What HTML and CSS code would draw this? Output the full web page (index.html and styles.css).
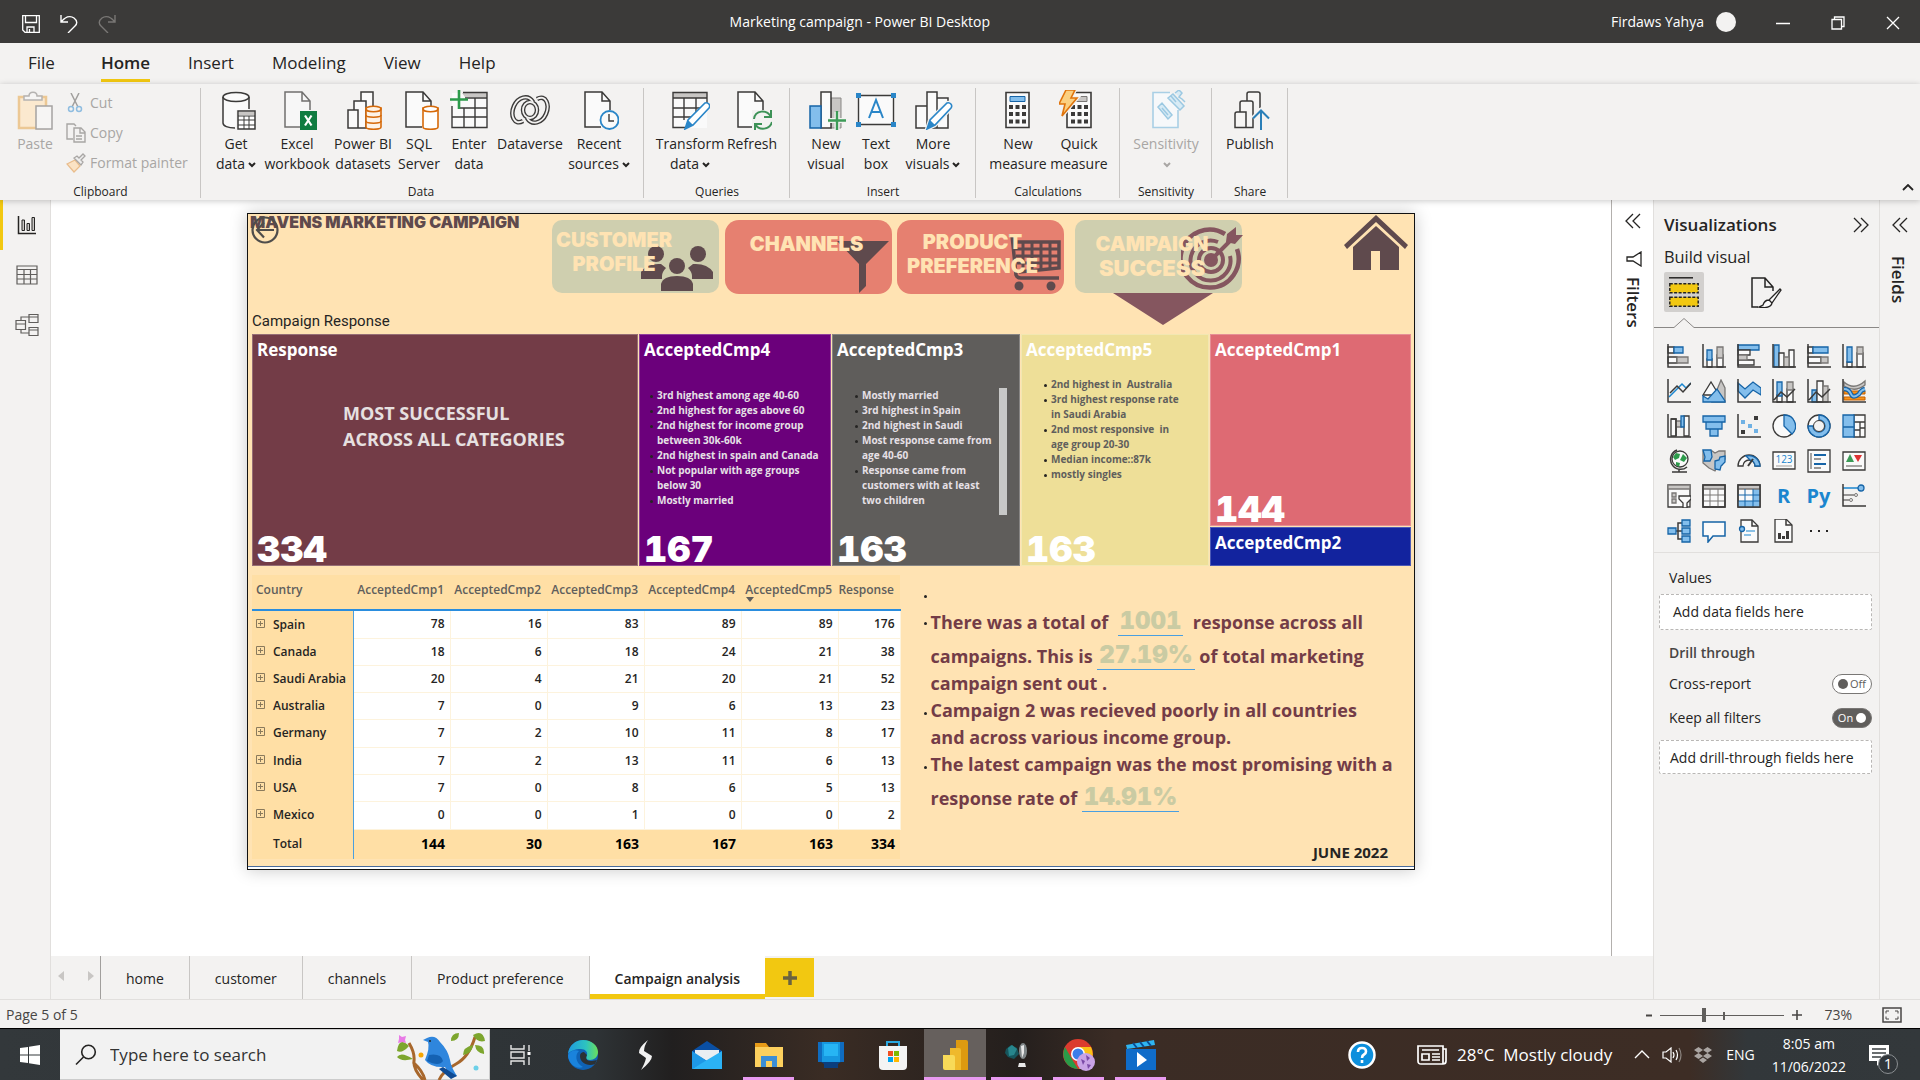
FILE: index.html
```html
<!DOCTYPE html>
<html lang="en">
<head>
<meta charset="utf-8">
<title>Marketing campaign - Power BI Desktop</title>
<link rel="stylesheet" href="styles.css">
</head>
<body>
<svg class="defs" aria-hidden="true">
  <symbol id="caret" viewBox="0 0 8 6"><path d="M1 1l3 3 3-3" fill="none" stroke="currentColor" stroke-width="2"/></symbol>
  <symbol id="dbl" viewBox="0 0 16 16"><path d="M8 1L1 8l7 7M15 1L8 8l7 7" fill="none" stroke="#252423" stroke-width="1.3"/></symbol>
  <symbol id="expand" viewBox="0 0 9 9"><path d="M.5.5h8v8h-8zM2 4.500h5M4.500 2v5" fill="none" stroke="#8a7a5c"/></symbol>
  <symbol id="page" viewBox="0 0 28 37"><path d="M1 1h17l8 9v26H1z" fill="#fafafa" stroke="none"/><path d="M26 19V10L18 1H1v35h16M18 1v9h8" fill="none" stroke="#3b3a39" stroke-width="1.5"/></symbol>
</svg>

<header class="titlebar">
  <div class="quick">
    <button aria-label="Save"><svg width="18" height="18" viewBox="0 0 18 18"><path d="M.7.7h16.600v16.600H3L.7 15zM3.500 1v6.500h11V1M5 17v-5h7v5M7.500 17v-3" fill="none" stroke="#fff" stroke-width="1.300"/></svg></button>
    <button aria-label="Undo"><svg width="18" height="18" viewBox="0 0 18 18"><path d="M1 0v7h7M1 7c4-5 9-7 13-4s3 6 1 8l-7 7" fill="none" stroke="#fff" stroke-width="1.400"/></svg></button>
    <button aria-label="Redo"><svg width="18" height="18" viewBox="0 0 18 18"><path d="M17 0v7h-7M17 7C13 2 8 0 4 3s-3 6-1 8l7 7" fill="none" stroke="#797775" stroke-width="1.400"/></svg></button>
  </div>
  <h1 class="wintitle">Marketing campaign - Power BI Desktop</h1>
  <div class="winright">
    <span>Firdaws Yahya</span><span class="avatar"></span>
    <button aria-label="Minimize"><svg width="14" height="14" viewBox="0 0 14 14"><path d="M0 7.500h14" stroke="#fff" stroke-width="1.500"/></svg></button>
    <button aria-label="Restore"><svg width="14" height="14" viewBox="0 0 14 14"><path d="M1 3.500h9.500V13H1zM3.500 3V1h9.500v9.500h-2" fill="none" stroke="#fff" stroke-width="1.300"/></svg></button>
    <button aria-label="Close"><svg width="14" height="14" viewBox="0 0 14 14"><path d="M1 1l12 12M13 1L1 13" stroke="#fff" stroke-width="1.300"/></svg></button>
  </div>
</header>

<nav class="menu">
  <a href="#">File</a><a href="#" class="on">Home</a><a href="#">Insert</a><a href="#">Modeling</a><a href="#">View</a><a href="#">Help</a>
</nav>

<section class="ribbon">
  <div class="group clip">
    <div class="tools">
      <button class="tool w48 off"><svg viewBox="0 0 40 40"><path d="M4 7h27v31H4z" fill="#fbe9cf" stroke="#ecc894" stroke-width="2.500"/><path d="M9 10V6h5c0-5 8-5 8 0h5v4z" fill="#f6f5f4" stroke="#b5b3b1" stroke-width="1.500"/><path d="M21 16h16v23H21z" fill="#f6f5f4" stroke="#a5a3a1" stroke-width="1.500"/></svg><span>Paste</span></button>
      <div class="small">
        <button><svg viewBox="0 0 20 20"><path d="M5 0l7 14M13 0L6 14" stroke="#a19f9d" stroke-width="1.500"/><circle cx="5" cy="16" r="2.500" fill="none" stroke="#8fbde0" stroke-width="1.500"/><circle cx="13" cy="16" r="2.500" fill="none" stroke="#8fbde0" stroke-width="1.500"/></svg>Cut</button>
        <button><svg viewBox="0 0 20 20"><path d="M7 16H1V1h7l2 2M8 5h7l4 4v10H8zM14 5v5h5M10 13h6M10 16h6" fill="none" stroke="#a8a6a4" stroke-width="1.400"/></svg>Copy</button>
        <button><svg viewBox="0 0 20 20"><path d="M1 11l8-4 5 6-6 6z" fill="#fbe3c4" stroke="#e9bd8c" stroke-width="1.300"/><path d="M8 5l7 7 2-3-2-2 4-4-2-2-4 4-2-2z" fill="#eee" stroke="#a8a6a4" stroke-width="1.300"/></svg>Format painter</button>
      </div>
    </div>
    <h2>Clipboard</h2>
  </div>
  <div class="group data">
    <div class="tools">
      <button class="tool w54"><svg viewBox="0 0 40 40"><path d="M7 7v26c0 3 6 5 13 5V20h13V7z" fill="#fafafa"/><ellipse cx="20" cy="7" rx="13" ry="4.500" fill="#fafafa" stroke="#3b3a39" stroke-width="1.500"/><path d="M7 7v26c0 3 5 5 12 5M33 7v12" fill="none" stroke="#3b3a39" stroke-width="1.500"/><path d="M22 21h17v18H22z" fill="#fff" stroke="#3b3a39" stroke-width="1.500"/><path d="M23 22h15v3H23z" fill="#c8c6c4"/><path d="M22 26h17M22 30h17M22 35h17M28 26v13M33 26v13" stroke="#3b3a39"/></svg><span>Get<br>data<svg class="car"><use href="#caret"/></svg></span></button>
      <button class="tool w68"><svg viewBox="0 0 40 40"><use href="#page" x="7" y="1" width="28" height="37" opacity=".7"/><path d="M23 21h17v19H23z" fill="#107c41"/><path d="M28 25.500l6.500 10M34.500 25.500l-6.500 10" stroke="#fff" stroke-width="2.200"/></svg><span>Excel<br>workbook</span></button>
      <button class="tool w64"><svg viewBox="0 0 40 40"><path d="M5 20h10v18H5zM11 11h12v27H15V20h-4zM18 2h12v36h-7V11h-5z" fill="#fafafa" stroke="#3b3a39" stroke-width="1.500"/><path d="M23 18v19c0 3 15 3 15 0V18z" fill="#fdf3e7" stroke="#d66a0a" stroke-width="1.600"/><ellipse cx="30.500" cy="19" rx="7.500" ry="2.800" fill="#fdf3e7" stroke="#d66a0a" stroke-width="1.600"/><path d="M23 25c0 3 15 3 15 0M23 31c0 3 15 3 15 0" fill="none" stroke="#d66a0a" stroke-width="1.600"/></svg><span>Power BI<br>datasets</span></button>
      <button class="tool w48"><svg viewBox="0 0 40 40"><use href="#page" x="6" y="1" width="28" height="37"/><path d="M24 18v19c0 3 15 3 15 0V18z" fill="#fff" stroke="#d66a0a" stroke-width="1.600"/><ellipse cx="31.500" cy="19" rx="7.500" ry="2.800" fill="#fff" stroke="#d66a0a" stroke-width="1.600"/></svg><span>SQL<br>Server</span></button>
      <button class="tool w52"><svg viewBox="0 0 40 40"><path d="M3 3h35v34H3z" fill="#fafafa"/><path d="M13 3h25v4H16z" fill="#c8c6c4"/><path d="M14 2.500h24v35H3V16M16 8h22M10 18h28M3 27h35M15 18v20M26 8v30" fill="none" stroke="#3b3a39" stroke-width="1.400"/><path d="M10 0v19M1 9.500h18" stroke="#2c9b4b" stroke-width="2.600"/></svg><span>Enter<br>data</span></button>
      <button class="tool w70"><svg viewBox="0 0 40 40" fill="none"><ellipse cx="20" cy="20" rx="7" ry="8" stroke="#3b3a39" stroke-width="4.500"/><path d="M27 9c9-5 13 6 9 15-4 9-14 12-19 4M13 31C4 36 0 25 4 16 8 7 18 4 23 12" stroke="#3b3a39" stroke-width="4.500"/><ellipse cx="20" cy="20" rx="7" ry="8" stroke="#f3f2f1" stroke-width="1.800"/><path d="M27 9c9-5 13 6 9 15-4 9-14 12-19 4M13 31C4 36 0 25 4 16 8 7 18 4 23 12" stroke="#f3f2f1" stroke-width="1.800"/></svg><span>Dataverse</span></button>
      <button class="tool w68"><svg viewBox="0 0 40 40"><use href="#page" x="5" y="1" width="28" height="37"/><circle cx="30.500" cy="30" r="9" fill="#fafafa" stroke="#2a86c8" stroke-width="1.800"/><path d="M30 24v7h5" fill="none" stroke="#3b3a39" stroke-width="1.400"/></svg><span>Recent<br>sources<svg class="car"><use href="#caret"/></svg></span></button>
    </div>
    <h2>Data</h2>
  </div>
  <div class="group">
    <div class="tools">
      <button class="tool w70"><svg viewBox="0 0 40 40"><path d="M3 3h34v35H3z" fill="#fafafa"/><path d="M3 3h34v5H3z" fill="#c8c6c4"/><path d="M37 14V2.500H3v35h13M3 8h34M3 18h27M3 27h20M14 8v22M26 8v14" fill="none" stroke="#3b3a39" stroke-width="1.400"/><path d="M15 39l3-9 17-17c3-1 6 2 4 5L23 35z" fill="#fff" stroke="#2a86c8" stroke-width="1.600"/><path d="M15 39l3-9 5 5z" fill="#2a86c8"/></svg><span>Transform<br>data<svg class="car"><use href="#caret"/></svg></span></button>
      <button class="tool w54"><svg viewBox="0 0 40 40"><use href="#page" x="5" y="1" width="28" height="37"/><path d="M20 20h20v20H20z" fill="#f3f2f1"/><path d="M22 29c1-9 13-10 17-2M39 20v7h-7M40 32c-2 8-13 9-17 2M23 40v-6h7" fill="none" stroke="#3d9257" stroke-width="2"/></svg><span>Refresh</span></button>
    </div>
    <h2>Queries</h2>
  </div>
  <div class="group">
    <div class="tools">
      <button class="tool w50"><svg viewBox="0 0 40 40"><path d="M25 8h10v30H25z" fill="#c8c6c4" stroke="#8a8886"/><path d="M15 2h10v36H15z" fill="#fafafa" stroke="#3b3a39" stroke-width="1.500"/><path d="M4 16h11v22H4z" fill="#83beec" stroke="#1664a7" stroke-width="1.500"/><path d="M31 22v18M22 30.500h18" stroke="#f3f2f1" stroke-width="5"/><path d="M31 21v19M22 30.500h18" stroke="#3d9b57" stroke-width="2.400"/></svg><span>New<br>visual</span></button>
      <button class="tool w50"><svg viewBox="0 0 40 40"><path d="M2.500 5.500h35v29h-35z" fill="#fafafa" stroke="#3b3a39" stroke-width="1.400"/><path d="M0 3h5v5H0zM35 3h5v5h-5zM0 32h5v5H0zM35 32h5v5h-5z" fill="#2a86c8"/><path d="M13 28l7-18 7 18M15.500 22h9" fill="none" stroke="#2a86c8" stroke-width="2"/></svg><span>Text<br>box</span></button>
      <button class="tool w64"><svg viewBox="0 0 40 40"><path d="M3 16h11v22H3zM14 2h10v36H14zM24 8h11v30H24z" fill="#fafafa" stroke="#3b3a39" stroke-width="1.500"/><path d="M14 39l3-9 17-17c3-1 6 2 4 5L22 35z" fill="#fff" stroke="#f3f2f1" stroke-width="4"/><path d="M14 39l3-9 17-17c3-1 6 2 4 5L22 35z" fill="#fff" stroke="#2a86c8" stroke-width="1.600"/><path d="M14 39l3-9 5 5z" fill="#2a86c8"/></svg><span>More<br>visuals<svg class="car"><use href="#caret"/></svg></span></button>
    </div>
    <h2>Insert</h2>
  </div>
  <div class="group">
    <div class="tools">
      <button class="tool w62"><svg viewBox="0 0 40 40"><path d="M8 2.500h23v35H8z" fill="#fafafa" stroke="#3b3a39" stroke-width="1.600"/><path d="M12 6.500h15v5H12z" fill="#83beec" stroke="#1664a7"/><path d="M11 17h17M11 24h17M11 31.500h17" stroke="#3b3a39" stroke-width="4" stroke-dasharray="4 2.500"/></svg><span>New<br>measure</span></button>
      <button class="tool w60"><svg viewBox="0 0 40 40"><path d="M8 2.500h24v35H8z" fill="#fafafa" stroke="#3b3a39" stroke-width="1.600"/><path d="M17 6.500h11v5H16z" fill="#c8c6c4" stroke="#797775"/><path d="M12 17h17M12 24h17M12 31.500h17" stroke="#3b3a39" stroke-width="4" stroke-dasharray="4 2.500"/><path d="M7 0h9l-4 8h6L3 26l3-12H0z" fill="#f9cf7a" stroke="#f3f2f1" stroke-width="4"/><path d="M7 0h9l-4 8h6L3 26l3-12H0z" fill="#fbd081" stroke="#e0740c" stroke-width="1.600"/></svg><span>Quick<br>measure</span></button>
    </div>
    <h2>Calculations</h2>
  </div>
  <div class="group">
    <div class="tools">
      <button class="tool w70 off"><svg viewBox="0 0 40 40"><path d="M24 2.500H7v35h25V20" fill="#f6f8fa" stroke="#a9cfe5" stroke-width="1.600"/><path d="M12 17l4-4 10 12-4 4zM16 18l6 7M22 8l5-4 11 12-4 4zM25 6l5 6M29 3l4-3 3 3-3 4 3 2 3 3" fill="#d8ebf5" stroke="#9cc9e2" stroke-width="1.500"/></svg><span>Sensitivity<br><svg class="car"><use href="#caret"/></svg></span></button>
    </div>
    <h2>Sensitivity</h2>
  </div>
  <div class="group">
    <div class="tools">
      <button class="tool w54"><svg viewBox="0 0 40 40"><path d="M5 37.500V24c0-2 1-2 2-2h9v15.500zM10 22v-9c0-1 1-2 2-2h9c1 0 2 1 2 2v24.500h-7M17 11V4c0-1 1-2 2-2h9c1 0 2 1 2 2v14" fill="#f6f5f4" stroke="#3b3a39" stroke-width="1.500"/><path d="M31 40V21M23 28.500l8-8 8 8" fill="none" stroke="#f3f2f1" stroke-width="5"/><path d="M31 40V21M23 28.500l8-8 8 8" fill="none" stroke="#2a7fb8" stroke-width="2"/></svg><span>Publish</span></button>
    </div>
    <h2>Share</h2>
  </div>
  <button class="collapse" aria-label="Collapse ribbon"><svg width="12" height="8" viewBox="0 0 12 8"><path d="M1 6l5-5 5 5" fill="none" stroke="#252423" stroke-width="1.800"/></svg></button>
</section>

<main class="work">
  <nav class="views">
    <button class="on" aria-label="Report view"><svg width="20" height="20" viewBox="0 0 20 20"><path d="M1.500 1v17.500H19" fill="none" stroke="#252423" stroke-width="1.500"/><path d="M5 5h2.500v10.500H5zM10 8.500h2.500v7H10zM15 2.500h2.500v13H15z" fill="#c8c6c4" stroke="#252423"/></svg></button>
    <button aria-label="Data view"><svg width="22" height="20" viewBox="0 0 22 20"><path d="M1 1h20v18H1zM1 4.500h20M1 9.500h20M1 14h20M8 4v15M14.500 4v15" fill="none" stroke="#605e5c" stroke-width="1.200"/></svg></button>
    <button aria-label="Model view"><svg width="24" height="24" viewBox="0 0 24 24"><path d="M14 1.500h9v8h-9zM14 4h9M14 14.500h9v8h-9zM14 17h9M1 7.500h9.500v9H1zM1 11h9.500M6 7V4h8M6 17v3h8" fill="none" stroke="#605e5c" stroke-width="1.200"/></svg></button>
  </nav>

  <div class="center">
    <div class="stage">
      <div class="canvas">
        <article class="report">
          <header class="rhead">
            <div class="rtitle">
              <h2>MAVENS MARKETING CAMPAIGN</h2>
              <button class="back" aria-label="Back"><svg width="28" height="28" viewBox="0 0 28 28"><circle cx="14" cy="14" r="12.500" fill="none" stroke="#4f4d4b" stroke-width="2.200"/><path d="M23 14H6M13 6.500L6 14l7 7.500" fill="none" stroke="#4f4d4b" stroke-width="2.200"/></svg></button>
              <h3>Campaign Response</h3>
            </div>
            <a href="#" class="card sage"><svg class="people" viewBox="0 0 72 45" fill="#5f4a4d"><ellipse cx="15" cy="8" rx="8" ry="8"/><ellipse cx="57" cy="8" rx="8" ry="8"/><path d="M0 33V26q6-9 20-8l5 4q-4 4-4 8v3zM72 33V26q-6-9-20-8l-5 4q4 4 4 8v3z"/><circle cx="36" cy="20" r="8"/><path d="M20 45v-7q2-8 16-8t16 8v7z"/></svg><span>CUSTOMER<br>PROFILE</span></a>
            <a href="#" class="card coral"><svg class="funnel" viewBox="0 0 52 52" fill="#5f4a4d"><path d="M0 0h52L29 23v22l-7 7V23z"/></svg><span>CHANNELS</span></a>
            <a href="#" class="card coral c3"><svg class="cart" viewBox="0 0 52 57"><path d="M0 1h3l4 40q1 3 5 3h38" fill="none" stroke="#5f4a4d" stroke-width="3.500"/><path d="M4 8h46v26l-40 4" fill="none" stroke="#5f4a4d" stroke-width="3.500"/><path d="M6 15h44M7 22h43M8 29h42M14 8v28M23 8v28M32 8v27M41 8v26" stroke="#5f4a4d" stroke-width="3"/><circle cx="10" cy="52" r="4.500" fill="#5f4a4d"/><circle cx="42" cy="52" r="4.500" fill="#5f4a4d"/></svg><span>PRODUCT<br>PREFERENCE</span></a>
            <a href="#" class="card sage c4"><svg class="target" viewBox="0 0 62 64" fill="none" stroke="#85565f"><path d="M44 7A29 29 0 1 0 56 22" stroke-width="4.500"/><path d="M37 15A20 20 0 1 0 49 29" stroke-width="4"/><circle cx="30" cy="33" r="12" stroke-width="4"/><circle cx="30" cy="33" r="7" fill="#85565f" stroke="none"/><path d="M30 33L52 11" stroke-width="4"/><path d="M45 15l1-8 9-7v8h7l-8 9z" fill="#85565f" stroke="none"/></svg><span>CAMPAIGN<br><b>SUCCESS</b></span><i class="pointer"></i></a>
            <a href="#" class="house" aria-label="Home page"><svg width="64" height="56" viewBox="0 0 64 56" fill="#5f4a4d"><path d="M32 0l32 30-3 4L32 7 3 34l-3-4z"/><path d="M32 11l23 21v23H36V36h-9v19H9V32z"/></svg></a>
          </header>

          <section class="treemap">
            <div class="tile t1"><h4>Response</h4><p class="big">MOST SUCCESSFUL<br>ACROSS ALL CATEGORIES</p><strong>334</strong></div>
            <div class="tile t2"><h4>AcceptedCmp4</h4>
              <ul><li>3rd highest among age 40-60</li><li>2nd highest for ages above 60</li><li>2nd highest for income group<br>between 30k-60k</li><li>2nd highest in spain and Canada</li><li>Not popular with age groups<br>below 30</li><li>Mostly married</li></ul><strong>167</strong></div>
            <div class="tile t3"><h4>AcceptedCmp3</h4>
              <ul><li>Mostly married</li><li>3rd highest in Spain</li><li>2nd highest in Saudi</li><li>Most response came from<br>age 40-60</li><li>Response came from<br>customers with at least<br>two children</li></ul><strong>163</strong></div>
            <div class="tile t4"><h4>AcceptedCmp5</h4>
              <ul><li>2nd highest in&nbsp; Australia</li><li>3rd highest response rate<br>in Saudi Arabia</li><li>2nd most responsive&nbsp; in<br>age group 20-30</li><li>Median income::87k</li><li>mostly singles</li></ul><strong>163</strong></div>
            <div class="tile t5"><h4>AcceptedCmp1</h4><strong>144</strong></div>
            <div class="tile t6"><h4>AcceptedCmp2</h4></div>
          </section>

          <section class="lower">
            <table class="matrix">
              <colgroup><col class="m0"><col class="m1"><col class="m1"><col class="m1"><col class="m1"><col class="m1"><col class="m2"></colgroup>
              <thead><tr><th>Country</th><th>AcceptedCmp1</th><th>AcceptedCmp2</th><th>AcceptedCmp3</th><th>AcceptedCmp4</th><th class="sorted">AcceptedCmp5</th><th>Response</th></tr></thead>
              <tbody>
                <tr><th><svg><use href="#expand"/></svg>Spain</th><td>78</td><td>16</td><td>83</td><td>89</td><td>89</td><td>176</td></tr>
                <tr><th><svg><use href="#expand"/></svg>Canada</th><td>18</td><td>6</td><td>18</td><td>24</td><td>21</td><td>38</td></tr>
                <tr><th><svg><use href="#expand"/></svg>Saudi Arabia</th><td>20</td><td>4</td><td>21</td><td>20</td><td>21</td><td>52</td></tr>
                <tr><th><svg><use href="#expand"/></svg>Australia</th><td>7</td><td>0</td><td>9</td><td>6</td><td>13</td><td>23</td></tr>
                <tr><th><svg><use href="#expand"/></svg>Germany</th><td>7</td><td>2</td><td>10</td><td>11</td><td>8</td><td>17</td></tr>
                <tr><th><svg><use href="#expand"/></svg>India</th><td>7</td><td>2</td><td>13</td><td>11</td><td>6</td><td>13</td></tr>
                <tr><th><svg><use href="#expand"/></svg>USA</th><td>7</td><td>0</td><td>8</td><td>6</td><td>5</td><td>13</td></tr>
                <tr><th><svg><use href="#expand"/></svg>Mexico</th><td>0</td><td>0</td><td>1</td><td>0</td><td>0</td><td>2</td></tr>
              </tbody>
              <tfoot><tr><th>Total</th><td>144</td><td>30</td><td>163</td><td>167</td><td>163</td><td>334</td></tr></tfoot>
            </table>
            <div class="insights">
              <ul>
                <li>&nbsp;</li>
                <li>There was a total of&nbsp; <em>1001</em>&nbsp; response across all<br>campaigns. This is <em>27.19%</em> of total marketing<br>campaign sent out .</li>
                <li>Campaign 2 was recieved poorly in all countries<br>and across various income group.</li>
                <li>The latest campaign was the most promising with a<br>response rate of <em>14.91%</em></li>
              </ul>
              <p class="date">JUNE 2022</p>
            </div>
          </section>
        </article>
      </div>
      <aside class="filters">
        <button aria-label="Expand filters"><svg width="16" height="16"><use href="#dbl"/></svg></button>
        <svg width="16" height="16" viewBox="0 0 16 16"><path d="M15 1v14L7 10H1V6h6z" fill="none" stroke="#252423" stroke-width="1.300"/></svg>
        <h2 class="vert">Filters</h2>
      </aside>
    </div>
    <nav class="pages">
      <button class="arrow" aria-label="Previous page"><svg width="7" height="10" viewBox="0 0 7 10"><path d="M6 0v10L0 5z" fill="#c8c6c4"/></svg></button>
      <button class="arrow" aria-label="Next page"><svg width="7" height="10" viewBox="0 0 7 10"><path d="M1 0v10l6-5z" fill="#c8c6c4"/></svg></button>
      <a href="#">home</a><a href="#">customer</a><a href="#">channels</a><a href="#">Product preference</a><a href="#" class="on">Campaign analysis</a>
      <button class="add" aria-label="New page"><svg width="14" height="14" viewBox="0 0 14 14"><path d="M7 0v14M0 7h14" stroke="#6b6340" stroke-width="3.500"/></svg></button>
    </nav>
  </div>

  <aside class="viz">
    <div class="vhead"><h2>Visualizations</h2><button aria-label="Collapse pane"><svg class="flip" width="16" height="16"><use href="#dbl"/></svg></button></div>
    <h3>Build visual</h3>
    <div class="modes">
      <button class="on" aria-label="Build visual"><svg width="30" height="30" viewBox="0 0 30 30"><path d="M0 .8h24" stroke="#252423" stroke-width="1.500"/><path d="M.8 6.800h28.400v9H.8zM.8 20.300h28.400v9H.8z" fill="#f2c811" stroke="#252423" stroke-width="1.500" stroke-dasharray="3 1.500"/></svg></button>
      <button aria-label="Format visual"><svg width="31" height="31" viewBox="0 0 31 31"><path d="M7 30H1V1h13l8 9v4M14 1v9h8" fill="none" stroke="#252423" stroke-width="1.500"/><path d="M29 12L18 23l3 3 9-13zM18 23c-4 0-5 2-6 5l-4 2c5 1 12 1 13-4z" fill="#fafafa" stroke="#252423" stroke-width="1.300"/></svg></button>
    </div>
    <div class="notch"><svg width="60" height="11" viewBox="0 0 60 11"><path d="M0 10.500h20l10-9 10 9h20" fill="none" stroke="#8a8886"/></svg></div>
    <div class="gallery">
      <button aria-label="Stacked bar"><svg viewBox="0 0 24 24"><path class="w" d="M1 3h6v6H1zM1 13h9v6H1z"/><path class="b" d="M7 3h9v6H7z"/><path class="g" d="M10 13h11v6H10z"/><path class="k" d="M1 0v23h23"/></svg></button>
      <button aria-label="Stacked column"><svg viewBox="0 0 24 24"><path class="w" d="M5 15h5v8H5zM15 11h6v12h-6z"/><path class="b" d="M5 6h5v10H5z"/><path class="g" d="M15 3h6v11h-6z"/><path class="k" d="M1 0v23h23"/></svg></button>
      <button aria-label="Clustered bar"><svg viewBox="0 0 24 24"><path class="b" d="M1 1h21v5H1z"/><path class="w" d="M1 6h12v5H1zM1 16h16v5H1z"/><path class="g" d="M1 11h9v5H1z"/><path class="k" d="M1 0v23h23"/></svg></button>
      <button aria-label="Clustered column"><svg viewBox="0 0 24 24"><path class="b" d="M2 1h5v22H2z"/><path class="w" d="M7 9h5v14H7zM17 6h5v17h-5z"/><path class="g" d="M12 13h5v10h-5z"/><path class="k" d="M1 0v23h23"/></svg></button>
      <button aria-label="100% stacked bar"><svg viewBox="0 0 24 24"><path class="w" d="M1 3h5v6H1zM1 13h13v6H1z"/><path class="b" d="M6 3h15v6H6z"/><path class="g" d="M14 13h7v6h-7z"/><path class="k" d="M1 0v23h23"/></svg></button>
      <button aria-label="100% stacked column"><svg viewBox="0 0 24 24"><path class="w" d="M5 18h5v5H5zM15 9h6v14h-6z"/><path class="b" d="M5 3h5v15H5z"/><path class="g" d="M15 3h6v7h-6z"/><path class="k" d="M1 0v23h23"/></svg></button>

      <button aria-label="Line"><svg viewBox="0 0 24 24"><path d="M2 18L15 5l4 4 5-5" fill="none" stroke="#1b86cf" stroke-width="1.500"/><path d="M3 14l7-7 6 6 8-9" fill="none" stroke="#3b3a39" stroke-width="1.500"/><path class="k" d="M1 0v23h23"/></svg></button>
      <button aria-label="Area"><svg viewBox="0 0 24 24"><path class="g" d="M10 23L19 1l4 8v14z"/><path class="w" d="M1 16L9 3l8 13z"/><path class="b" d="M1 17l5 3 9-10 8 12v1H1z"/></svg></button>
      <button aria-label="Stacked area"><svg viewBox="0 0 24 24"><path class="b" d="M1 4l7 6 8-7 8 6v7l-8-5-8 8-7-7z"/><path class="k" d="M1 0v23h23"/></svg></button>
      <button aria-label="Line and stacked column"><svg viewBox="0 0 24 24"><path class="w" d="M5 16h5v7H5zM15 10h6v13h-6z"/><path class="b" d="M5 3h5v14H5z"/><path class="g" d="M15 3h6v8h-6z"/><path class="k" d="M1 0v23h23M2 21l7-8 6 5 8-8"/></svg></button>
      <button aria-label="Line and clustered column"><svg viewBox="0 0 24 24"><path class="b" d="M5 11h5v12H5z"/><path class="w" d="M10 2h6v21h-6z"/><path class="g" d="M16 7h5v16h-5z"/><path class="k" d="M1 0v23h23M2 21l7-8 6 5 8-8"/></svg></button>
      <button aria-label="Ribbon"><svg viewBox="0 0 24 24"><path d="M2 12h21v3H2zM2 18h21v3H2z" fill="#f7941d" stroke="#c35f00"/><path class="g" d="M2 3q10 9 21-1v4q-10 8-21 1z"/><path d="M2 10q5 0 7 5t8 0q2-4 6-5" fill="none" stroke="#1664a7" stroke-width="4.500"/><path d="M2 10q5 0 7 5t8 0q2-4 6-5" fill="none" stroke="#83beec" stroke-width="2"/><path class="k" d="M1 0v23h23"/></svg></button>

      <button aria-label="Waterfall"><svg viewBox="0 0 24 24"><path class="w" d="M4 5h5v17H4zM17 2h5v20h-5z"/><path class="g" d="M9 7h5v6H9z"/><path class="b" d="M14 2h3v11h-3z"/><path class="k" d="M1 0v23h23M4 5h5v17"/></svg></button>
      <button aria-label="Funnel"><svg viewBox="0 0 24 24"><path class="b" d="M1 2h22v6H1zM4 8h16v7H4zM8 15h8v7H8z"/></svg></button>
      <button aria-label="Scatter"><svg viewBox="0 0 24 24"><path d="M17 2h4v4h-4zM4 16h4v4H4z" fill="#3b3a39"/><path d="M4 6h4v4H4zM11 10h4v4h-4zM17 15h4v4h-4z" fill="#6fb1e4"/><path class="k" d="M1 0v23h23"/></svg></button>
      <button aria-label="Pie"><svg viewBox="0 0 24 24"><circle class="w" cx="12" cy="12" r="11"/><path class="b" d="M12 1a11 11 0 0 1 8 19l-8-8z"/></svg></button>
      <button aria-label="Donut"><svg viewBox="0 0 24 24"><circle class="w" cx="12" cy="12" r="11"/><path class="b" d="M12 1a11 11 0 1 1-11 11h5a6 6 0 1 0 6-6z"/><circle cx="12" cy="12" r="5.500" fill="#f3f2f1" stroke="#3b3a39"/></svg></button>
      <button aria-label="Treemap"><svg viewBox="0 0 24 24"><path class="w" d="M12 1h11v22H12zM12 8h11M18 8v15M12 16h6M18 14h5"/><path class="b" d="M1 1h11v22H1zM1 13h11"/></svg></button>

      <button aria-label="Map"><svg viewBox="0 0 24 24"><circle class="w" cx="13" cy="10" r="8"/><path d="M9 4l4 1-1 4-4 2-2-3zM16 5l4 4-3 4-4-2zM9 13l4 1-1 4-3-2z" fill="#2d9b4b"/><path class="k" d="M10 1A10 10 0 1 0 20 18M12 20v3M5 23h15"/></svg></button>
      <button aria-label="Filled map"><svg viewBox="0 0 24 24"><path class="g" d="M1 2h9l3 2 4-2h6v8l-3 6-5 2-2 4-6-3-6-5z"/><path class="b" d="M1 1h8l1 7-2 4H2l1-4zM13 12l4-1 1-3 5-1v6l-4 4-1 4-5-1z"/></svg></button>
      <button aria-label="Gauge"><svg viewBox="0 0 24 24"><path class="w" d="M1 17a11 11 0 0 1 22 0h-5a6 6 0 0 0-12 0z"/><path class="b" d="M9 7a11 11 0 0 1 14 10h-5a6 6 0 0 0-5-6z"/><path d="M11 17l5-7" stroke="#3b3a39" stroke-width="2"/></svg></button>
      <button aria-label="Card"><svg viewBox="0 0 24 24"><path class="w" d="M1 3h22v17H1z"/><path d="M4 17h16" stroke="#a19f9d"/><text x="12" y="14" text-anchor="middle" class="cardtext">123</text></svg></button>
      <button aria-label="Multi-row card"><svg viewBox="0 0 24 24"><path class="w" d="M1 1h22v22H1z"/><path d="M7 6h12M7 15h12" stroke="#1664a7" stroke-width="2"/><path d="M7 10h7M7 19h7M4 4v16" stroke="#797775" stroke-width="1.300"/></svg></button>
      <button aria-label="KPI"><svg viewBox="0 0 24 24"><path class="w" d="M1 3h22v18H1z"/><path d="M4 13l4-8 4 8z" fill="#3d9b57"/><path d="M12 6h8l-4 7z" fill="#d33"/><path d="M4 17h16" stroke="#797775" stroke-width="1.300"/></svg></button>

      <button aria-label="Slicer"><svg viewBox="0 0 24 24"><path class="w" d="M1 1h22v22H1z"/><path class="g" d="M1 1h22v4H1zM5 9h4v4H5zM5 15h4v4H5z"/><path d="M12 12h12v3l-4 4v5h-4v-5l-4-4z" fill="#fafafa" stroke="#3b3a39" stroke-width="1.300"/></svg></button>
      <button aria-label="Table"><svg viewBox="0 0 24 24"><path class="w" d="M1 1h22v22H1z"/><path class="g" d="M1 1h22v4H1z"/><path d="M1 11h22M1 17h22M8 5v18M16 5v18" stroke="#797775"/><path class="k" d="M1 1h22v22H1z"/></svg></button>
      <button aria-label="Matrix"><svg viewBox="0 0 24 24"><path class="w" d="M1 1h22v22H1z"/><path d="M16 5h7v18H1v-6h15z" fill="#83beec"/><path class="g" d="M1 1h22v4H1z"/><path d="M1 11h22M1 17h22M8 5v18M16 5v18" stroke="#1664a7"/><path class="k" d="M1 1h22v22H1z"/></svg></button>
      <button aria-label="R visual" class="txt">R</button>
      <button aria-label="Python visual" class="txt">Py</button>
      <button aria-label="Key influencers"><svg viewBox="0 0 24 24"><path d="M1 4h16" stroke="#1b86cf" stroke-width="1.500"/><circle class="b" cx="19" cy="4" r="3"/><path d="M1 11h11M1 16h6" stroke="#797775" stroke-width="1.500"/><circle cx="14" cy="11" r="1.500" fill="none" stroke="#797775"/><circle cx="9" cy="16" r="1.500" fill="none" stroke="#797775"/><path class="k" d="M1 0v22h23"/></svg></button>

      <button aria-label="Decomposition tree"><svg viewBox="0 0 24 24"><path class="k" d="M8 12h7M15 4h-4v16h4"/><path class="b" d="M1 9h8v6H1zM15 1h8v6h-8zM15 9h8v6h-8zM15 17h8v6h-8z"/></svg></button>
      <button aria-label="Q and A"><svg viewBox="0 0 24 24"><path d="M1 3h22v14H11l-5 6v-6H1z" fill="#fafafa" stroke="#1664a7" stroke-width="1.500"/></svg></button>
      <button aria-label="Narrative"><svg viewBox="0 0 24 24"><path class="w" d="M4 1h11l6 6v16H4z"/><path class="k" d="M15 1v6h6"/><path d="M9 12h9M7 16h7" stroke="#1b86cf"/><circle class="b" cx="5" cy="10" r="2.500"/></svg></button>
      <button aria-label="Paginated report"><svg viewBox="0 0 24 24"><path class="w" d="M3 0h11l6 6v17H3z"/><path class="k" d="M14 0v6h6"/><path d="M6 14h3v6H6zM10 17h3v3h-3zM14 12h3v8h-3z" fill="#3b3a39"/></svg></button>
      <button aria-label="More visuals"><svg viewBox="0 0 24 24"><path d="M3 11h2v2H3zM11 11h2v2h-2zM19 11h2v2h-2z" fill="#252423"/></svg></button>
    </div>
    <div class="wells">
      <h4>Values</h4>
      <div class="well wide">Add data fields here</div>
      <h4 class="dt">Drill through</h4>
      <label class="opt">Cross-report<span class="sw"><input type="checkbox">Off</span></label>
      <label class="opt">Keep all filters<span class="sw lit">On<input type="checkbox" checked></span></label>
      <div class="well">Add drill-through fields here</div>
    </div>
  </aside>

  <aside class="fields">
    <button aria-label="Expand fields"><svg width="16" height="16"><use href="#dbl"/></svg></button>
    <h2 class="vert">Fields</h2>
  </aside>
</main>

<footer class="status">
  <span>Page 5 of 5</span>
  <div class="zoom">
    <button aria-label="Zoom out"><svg width="6" height="14" viewBox="0 0 6 14"><path d="M0 7.500h6" stroke="#484644" stroke-width="2"/></svg></button>
    <input type="range" min="10" max="210" value="80" aria-label="Zoom">
    <button aria-label="Zoom in"><svg width="10" height="14" viewBox="0 0 10 14"><path d="M0 7h10M5 2v10" stroke="#484644" stroke-width="1.600"/></svg></button>
    <span class="pct">73%</span>
    <button aria-label="Fit to page"><svg width="20" height="16" viewBox="0 0 20 16"><path d="M1 1h18v14H1z" fill="none" stroke="#484644" stroke-width="1.500"/><path d="M4 6.500V4h3M13 4h3v2.500M16 9.500V12h-3M7 12H4V9.500" fill="none" stroke="#484644"/></svg></button>
  </div>
</footer>

<footer class="taskbar">
  <button class="start" aria-label="Start"><svg width="20" height="20" viewBox="0 0 20 20" fill="#fff"><path d="M0 3l8-1v7.500H0zM9 1.800L20 0v9.500H9zM0 10.500h8V18l-8-1zM9 10.500h11V20L9 18.200z"/></svg></button>
  <label class="search"><svg width="22" height="22" viewBox="0 0 22 22"><circle cx="13.500" cy="8" r="6.800" fill="none" stroke="#252423" stroke-width="1.600"/><path d="M8.500 13L1 20.500" stroke="#252423" stroke-width="1.600"/></svg>
    <input type="text" placeholder="Type here to search" aria-label="Search">
    <svg class="bird" width="92" height="49" viewBox="0 0 92 49"><path d="M14 12q6 10 5 18t9 19M44 49q4-9 17-16T80 6M30 49q-2-9-12-18" fill="none" stroke="#a8672c" stroke-width="3"/><path d="M14 15Q4 5 2 20q5 3 12-5zM18 28q-12-8-16-2 4 5 16 2zM64 2q-8 0-8 8 8 0 8-8zM78 4q10-6 12 6-8 2-12-6zM78 14q-10 2-10 10 9-1 10-10zM80 14q10 0 9 9-8-1-9-9z" fill="#7da62e"/><path d="M32 7q8-4 13 4 8 8 10 18 1 7 7 16l-6 1-6-10q-14 1-20-7 5-12 3-18l-5-2z" fill="#2f86dd"/><path d="M34 24q12-2 14 6-4 6-16 0z" fill="#1562b3"/><path d="M48 36l14 9-6 3-12-10z" fill="#0f4a92"/><circle cx="35" cy="10" r="1" fill="#222"/><path d="M4 4l3 2 4-1-1 4 1 3-4-1-4 1 1-4z" fill="#e87be6"/><circle cx="26" cy="24" r="2.500" fill="#f5a500"/><circle cx="81" cy="37" r="2.500" fill="#6cd0e8"/></svg>
  </label>
  <nav class="apps">
    <button aria-label="Task view"><svg width="22" height="20" viewBox="0 0 22 20"><path d="M1 0v4h13V0M1 20v-4h13v4M1 7h13v6H1zM19 0v6M19 12v8" fill="none" stroke="#e6e6e6" stroke-width="1.400"/><path d="M17.500 7h3v3h-3z" fill="#fff"/></svg></button>
    <button aria-label="Edge"><svg width="30" height="30" viewBox="0 0 30 30"><defs><linearGradient id="e1"><stop offset="0" stop-color="#1f9be0"/><stop offset=".6" stop-color="#2dc3c0"/><stop offset="1" stop-color="#6be05a"/></linearGradient></defs><circle cx="15" cy="15" r="15" fill="#0f62b5"/><path d="M0 14C1 5 8 0 15 0c9 0 15 6 15 12 0 5-4 8-8 8-5 0-4-3-3-5 1-3-2-6-6-6C7 9 2 11 0 14z" fill="url(#e1)"/><path d="M0 15c2-4 7-6 11-4-4 3-4 12 4 16-6 3-15-3-15-12z" fill="#1a83dc"/><path d="M19 15c-2 4 0 6 5 6l5-1-2 4c-7 3-15-1-15-8 0-3 2-4 4-4z" fill="#2c3134"/></svg></button>
    <button aria-label="Media"><svg width="14" height="30" viewBox="0 0 14 30"><path d="M10 0Q0 8 1 13l7 5q-1 5-5 12 11-9 11-14l-8-5q0-5 4-11z" fill="#f2f2f2"/></svg></button>
    <button aria-label="Mail"><svg width="30" height="28" viewBox="0 0 30 28"><path d="M0 10L15 0l15 10v18H0z" fill="#0a4fa3"/><path d="M3 9h24v4L15 20 3 13z" fill="#e9eef2"/><path d="M0 10l15 10L0 28z" fill="#1e98e6"/><path d="M30 10v18H0z" fill="#2bb2f5"/></svg></button>
    <button class="run" aria-label="File Explorer"><svg width="28" height="24" viewBox="0 0 28 24"><path d="M0 0h11l3 4h12v6H0z" fill="#e79b18"/><path d="M0 4h28v20H0z" fill="#fcd05e"/><path d="M6 24V13h16v11h-5v-6h-6v6z" fill="#3b8ed6"/></svg></button>
    <button aria-label="Phone"><svg width="28" height="26" viewBox="0 0 28 26"><path d="M1 0h26v20H1z" fill="#0f6cc0"/><path d="M5 0h18v20H5z" fill="#1697e0"/><path d="M7 2h14v12H7z" fill="#27b5f4"/><path d="M4 20h20l-3 2v4H7v-4z" fill="#0b3f7e"/></svg></button>
    <button aria-label="Store"><svg width="28" height="30" viewBox="0 0 28 30"><path d="M8 6V2h12v4" fill="none" stroke="#2aa7e0" stroke-width="2"/><path d="M0 6h28v20q0 4-4 4H4q-4 0-4-4z" fill="#f4f4f4"/><path d="M9 11h5v5H9z" fill="#f25022"/><path d="M15 11h5v5h-5z" fill="#7fba00"/><path d="M9 17h5v5H9z" fill="#00a4ef"/><path d="M15 17h5v5h-5z" fill="#ffb900"/></svg></button>
    <button class="run active" aria-label="Power BI"><svg width="25" height="30" viewBox="0 0 25 30"><path d="M13 0h10q2 0 2 2v28H13z" fill="#dd9a10"/><path d="M7 8h9q2 0 2 2v20H7z" fill="#efb92c"/><path d="M0 15h10q2 0 2 2v13H2q-2 0-2-2z" fill="#f8da58"/></svg></button>
    <button class="run" aria-label="Assistant"><svg width="24" height="24" viewBox="0 0 24 24"><path d="M1 6l5-4 6 3 2 6-5 5-6-2-3-4z" fill="#16555c"/><path d="M3 5l4-3 5 4-3 6-5 1z" fill="#27858c"/><ellipse cx="18" cy="8" rx="4" ry="8" fill="#7f8688"/><path d="M16 3l3-1v8l-2 5zM14 20h6l1 4h-8z" fill="#e8e8e8"/></svg></button>
    <button class="run" aria-label="Chrome"><svg width="32" height="32" viewBox="0 0 32 32"><circle cx="15" cy="15" r="15" fill="#db3b2e"/><path d="M2 8l8 14 5 8A15 15 0 0 1 2 8z" fill="#2a9b48"/><path d="M15 8h13a15 15 0 0 1-12 22l6-12z" fill="#fbc116"/><circle cx="15" cy="15" r="7" fill="#fff"/><circle cx="15" cy="15" r="5.500" fill="#3d7de8"/><circle cx="23" cy="23" r="9" fill="#c9a3e6"/><path d="M18 20l4 2-2 4zM23 16l4 3-3 3zM24 25l4 1-3 4z" fill="#7b4aa8"/></svg></button>
    <button class="run" aria-label="Films"><svg width="30" height="30" viewBox="0 0 30 30"><path d="M0 5L28 0l1 5L1 9z" fill="#2fb5f1"/><path d="M7 3l4 5M14 2l4 5M21 1l4 5" stroke="#0a4c94" stroke-width="2"/><path d="M0 9h30v21H0z" fill="#0f6cc9"/><path d="M11 12l10 8-10 7z" fill="#fff"/></svg></button>
  </nav>
  <div class="tray">
    <svg width="28" height="28" viewBox="0 0 28 28"><circle cx="14" cy="14" r="12.500" fill="#0c8fdd" stroke="#fff" stroke-width="2.500"/><path d="M10 11q0-4 4-4t4 3.500q0 2-2 3t-2 3.500M14 19v3" fill="none" stroke="#fff" stroke-width="2.600"/></svg>
    <svg class="news" width="30" height="20" viewBox="0 0 30 20"><path d="M1 1h25v18H4q-3 0-3-3zM26 4h3v12q0 3-3 3M5 5h17M15 9h8M15 12h8M15 15h8M5 9h7v6H5z" fill="none" stroke="#fff" stroke-width="1.700"/></svg>
    <span class="weather">28°C&nbsp; Mostly cloudy</span>
    <svg class="up" width="16" height="9" viewBox="0 0 16 9"><path d="M1 8l7-7 7 7" fill="none" stroke="#fff" stroke-width="1.400"/></svg>
    <svg width="20" height="16" viewBox="0 0 20 16"><path d="M1 5h3l5-4v14l-5-4H1z" fill="none" stroke="#fff" stroke-width="1.200"/><path d="M11 5q2 3 0 6M14 3q3 5 0 10" fill="none" stroke="#fff" stroke-width="1.200"/><path d="M17 1q4 7 0 14" fill="none" stroke="#8d8681" stroke-width="1.200"/></svg>
    <svg width="18" height="16" viewBox="0 0 18 16" fill="#aaa5a2"><path d="M4.500 0L9 3 4.500 6 0 3zM13.500 0L18 3l-4.500 3L9 3zM4.500 6L9 9l-4.500 3L0 9zM13.500 6L18 9l-4.500 3L9 9zM9 10.500l4 2.500-4 3-4-3z"/></svg>
    <span class="lang">ENG</span>
    <time>8:05 am<br>11/06/2022</time>
    <svg class="note" width="32" height="32" viewBox="0 0 32 32"><path d="M1 2h20v16H13l-4 5v-5H1z" fill="#fff"/><path d="M4 6h14M4 10h14M4 14h9" stroke="#3a3f42" stroke-width="1.300"/><circle cx="20" cy="21" r="9.500" fill="#31363a" stroke="#8b8f92"/><text x="20" y="26" text-anchor="middle" class="count">1</text></svg>
  </div>
</footer>
</body>
</html>
```
FILE: styles.css
```css
* { box-sizing: border-box; }
body {
  margin: 0; min-height: 100vh; display: flex; flex-direction: column;
  font: 14px/20px "Open Sans", "Noto Sans", sans-serif; color: #252423; background: #f3f2f1;
}
h1, h2, h3, h4, p, ul { margin: 0; padding: 0; font-weight: 400; }
ul { list-style: none; }
a { color: inherit; text-decoration: none; }
button { border: 0; padding: 0; background: none; font: inherit; color: inherit; }
svg { display: block; flex: none; }
.defs { position: absolute; width: 0; height: 0; }

/* title bar */
.titlebar { display: grid; grid-template-columns: 38% 1fr auto; align-items: center; height: 43px; background: #3b3a39; color: #fff; }
.quick { display: flex; gap: 20px; padding: 4px 0 0 22px; }
.wintitle { font-size: 14px; }
.winright { display: flex; align-items: center; padding-right: 20px; }
.winright button { width: 14px; margin-left: 41px; padding-top: 3px; }
.avatar { width: 20px; height: 20px; border-radius: 50%; background: #f3f2f1; margin-left: 12px; }
.winright .avatar + button { margin-left: 40px; }

/* menu tabs */
.menu { display: flex; gap: 38px; height: 41px; padding: 6px 28px 0; font-size: 17px; line-height: 28px; }
.menu a { height: 33px; }
.menu .on { font-weight: 600; border-bottom: 3px solid #f2c811; }
.menu a:first-child { margin-right: 8px; }

/* ribbon */
.ribbon { display: flex; position: relative; z-index: 2; height: 116px; padding-top: 4px; box-shadow: 0 1px 6px rgba(0,0,0,.22); background: #f3f2f1; }
.group { display: flex; flex-direction: column; height: 112px; padding: 2px 11px 0 11px; position: relative; }
.group::after { content: ""; position: absolute; right: 0; top: 0; width: 1px; height: 110px; background: #c8c6c4; }
.group h2 { margin-top: auto; font-size: 12px; line-height: 16px; text-align: center; }
.group.clip { padding-left: 15px; width: 201px; padding-right: 0; }
.group.clip h2 { padding-right: 15px; }
.group.data { padding-left: 8px; }
.tools { display: flex; }
.tool { display: flex; flex-direction: column; align-items: center; gap: 4px; white-space: nowrap; }
.tool > svg { width: 40px; height: 40px; }
.tool .car { display: inline-block; width: 8px; height: 6px; margin-left: 3px; vertical-align: 1px; }
.off, .small { color: #a8a6a4; }
.small { display: flex; flex-direction: column; gap: 10px; padding: 3px 0 0 11px; }
.small button { display: flex; align-items: center; gap: 4px; height: 20px; }
.small svg { width: 20px; height: 20px; }
.w48 { width: 48px; } .w50 { width: 50px; } .w52 { width: 52px; } .w54 { width: 54px; }
.w60 { width: 60px; } .w62 { width: 62px; } .w64 { width: 64px; } .w68 { width: 68px; } .w70 { width: 70px; }
.clip .tool { width: 40px; }
.collapse { margin: auto 6px 8px auto; }

/* work area */
.work { flex: 1; display: flex; min-height: 0; border-bottom: 1px solid #e1dfdd; }
.views { width: 51px; border-right: 1px solid #e1dfdd; display: flex; flex-direction: column; }
.views button { height: 50px; display: grid; place-items: center; border-left: 3px solid transparent; }
.views .on { border-color: #f2c811; }
.center { flex: 1; min-width: 0; display: flex; flex-direction: column; }
.stage { flex: 1; display: flex; background: #fff; }
.canvas { flex: 1; padding-top: 13px; }
.report { max-width: 1168px; margin: 0 auto; border: 1px solid #111; background: #ffe3b3; box-shadow: 0 0 16px rgba(0,0,0,.22); padding: 0 3px 2px 4px; background-image: linear-gradient(#fff, #fff), linear-gradient(#4a6a9a, #4a6a9a); background-size: 100% 2px, 100% 3px; background-position: bottom; background-repeat: no-repeat; }
.rhead { display: flex; height: 120px; padding-top: 6px; }
.rtitle { flex: none; width: 300px; position: relative; display: flex; flex-direction: column; justify-content: space-between; white-space: nowrap; margin-top: -6px; }
.rtitle h2 { font: 900 16px/16px Inter, sans-serif; color: #5f4a4d; margin-left: -2px; }
.rtitle h3 { font: 15px/25px Roboto, sans-serif; }
.back { position: absolute; left: -1px; top: 2px; }
.card { position: relative; flex: none; width: 167px; height: 73px; border-radius: 10px; margin-right: 6px; font: 900 20px/24px Inter, sans-serif; color: #ffe3b3; text-align: center; }
.card b { font-size: 22px; font-weight: 900; }
.card span { position: relative; display: block; width: 124px; padding-top: 8px; }
.card svg { position: absolute; }
.sage { background: #cfcfaf; }
.coral { background: #e68070; border-radius: 14px; height: 74px; }
.coral + .coral { margin-left: -1px; }
.coral span { width: 163px; padding-top: 12px; }
.coral.c3 { margin-right: 11px; }
.c3 span { width: 151px; padding-top: 10px; }
.c4 span { width: 154px; padding-top: 12px; }
.people { width: 72px; height: 45px; left: 89px; top: 26px; }
.funnel { width: 52px; height: 52px; left: 112px; top: 21px; }
.cart { width: 52px; height: 57px; left: 112px; top: 14px; }
.target { width: 62px; height: 64px; left: 106px; top: 7px; }
.pointer { position: absolute; left: 38px; top: 73px; border: 50px solid transparent; border-width: 32px 50px 0; border-top-color: #85565f; }
.house { margin: -5px 3px 0 auto; }

.treemap { display: grid; grid-template-columns: 386fr 192fr 188fr 188fr 201fr; grid-template-rows: 192px 39px; gap: 1px; }
.tile { grid-row: span 2; display: flex; flex-direction: column; min-width: 0; padding: 3px 0 0 4px; color: #fff; border: 1px solid rgba(255,255,255,.25); }
.tile h4 { font-size: 17px; line-height: 24px; font-weight: 700; }
.tile strong { margin-top: auto; font: 900 36px/32px Inter, sans-serif; font-variant-numeric: tabular-nums; }
.tile ul { margin: 26px 0 0 6px; font-size: 10px; line-height: 15px; font-weight: 700; color: #e6e0e6; white-space: nowrap; }
.tile li, .insights li { position: relative; padding-left: 7px; }
.tile li::before, .insights li::before { content: ""; position: absolute; left: 0; top: 7px; width: 3px; height: 3px; border-radius: 50%; background: #252423; }
.big { margin: 38px 0 0 86px; font-size: 18px; line-height: 26px; font-weight: 700; color: #e6e0e0; white-space: nowrap; }
.t1 { background: #733c47; }
.t2 { background: #6b007b; }
.t3 { background: #5f5d5b; }
.t4 { background: #eedf98; }
.t5, .t6 { grid-row: auto; }
.t5 { background: #de6a73; }
.t6 { background: #12239e; }
.tile.t3 ul { margin-left: 18px; margin-right: 12px; height: 127px; border-right: 8px solid #c8c8c8; }
.tile.t4 ul { margin: 15px 0 0 18px; color: #605e5c; }

.lower { display: flex; margin-top: 9px; height: 292px; }
.matrix { flex: none; width: 648px; height: 284px; border-collapse: collapse; table-layout: fixed; font-size: 12px; line-height: 16px; font-weight: 600; white-space: nowrap; }
.m0 { width: 101px; } .m1 { width: 97px; } .m2 { width: 62px; }
.matrix th, .matrix td { padding: 0 5px 0 0; text-align: right; font-weight: 600; }
.matrix th { background: #ffdfa5; }
.matrix thead tr { height: 35px; }
.matrix thead th { color: #605e5c; border-bottom: 2px solid #2a8dde; padding-bottom: 4px; padding-right: 6px; position: relative; }
.matrix tr th:first-child { text-align: left; padding-left: 4px; }
.matrix tbody th, .matrix tfoot th { border-right: 1px solid #4a9fe0; }
.matrix tbody th svg { display: inline-block; width: 9px; height: 9px; margin-right: 8px; vertical-align: 1px; }
.matrix tbody td { background: #fff; border: 1px solid #fdf3dd; border-width: 0 1px 1px 0; }
.matrix tfoot td { background: #ffdfa5; font-size: 14px; font-weight: 700; color: #000; }
.matrix tfoot tr { height: 30px; }
.matrix tfoot tr th:first-child { padding-left: 21px; }
.sorted::after { content: ""; position: absolute; left: 5px; bottom: 7px; border: 4px solid transparent; border-width: 5px 4px 0; border-top-color: #605e5c; }

.insights { flex: 1; min-width: 0; display: flex; flex-direction: column; padding-left: 23px; }
.insights ul { font-size: 18px; line-height: 27px; font-weight: 700; color: #733c47; white-space: nowrap; }
.insights li::before { top: 15px; }
.insights li:nth-child(-n+2)::before { top: 20px; }
.insights em { display: inline-block; padding: 6px 2px 1px; font: 900 24px/26px Inter, sans-serif; font-variant-numeric: tabular-nums; color: #cacba3; border-bottom: 1px solid #4a9fe0; }
.date { margin: auto 23px 5px auto; font-size: 15px; line-height: 20px; font-weight: 700; }

.filters { width: 42px; border-left: 1px solid #b3b0ad; padding: 13px 0 0 13px; display: flex; flex-direction: column; align-items: flex-start; }
.filters > svg { margin: 22px 0 10px 1px; }
.vert { writing-mode: vertical-rl; font-size: 17px; line-height: 17px; font-weight: 600; }

/* page tabs */
.pages { display: flex; height: 43px; background: #f3f2f1; }
.pages a { display: flex; align-items: center; padding: 2px 25px 0; border-right: 1px solid #c8c6c4; }
.arrow { width: 24px; padding: 0 0 4px 7px; }
.arrow + .arrow { width: 26px; padding-left: 12px; border-right: 1px solid #a19f9d; }
.pages .on { background: #fff; box-shadow: inset 0 -5px #f2c811; font-weight: 600; border: 0; }
.add { width: 49px; margin: 2px 0; background: #f2c811; display: grid; place-items: center; }

/* visualizations */
.viz { display: flex; flex-direction: column; width: 226px; border-left: 1px solid #e1dfdd; }
.vhead { display: flex; justify-content: space-between; align-items: center; padding: 12px 10px 0; }
.vhead h2 { font-size: 17px; line-height: 26px; font-weight: 600; }
.flip { transform: scaleX(-1); }
.viz h3 { padding: 9px 10px 5px; }
.modes { display: flex; padding-left: 10px; gap: 42px; }
.modes button { width: 40px; height: 40px; display: grid; place-items: center; border-radius: 2px; }
.modes .on { background: #d2d0ce; }
.notch { display: flex; align-items: flex-end; margin-top: 5px; }
.notch::after { content: ""; flex: 1; height: 1px; background: #8a8886; }
.gallery { display: grid; grid-template-columns: repeat(6, 35px); grid-auto-rows: 35px; padding: 10px 0 4px 7px; border-bottom: 1px solid #e1dfdd; }
.gallery button { display: grid; place-items: center; }
.gallery svg { width: 24px; height: 24px; }
.gallery .k { fill: none; stroke: #3b3a39; stroke-width: 1.500; }
.gallery .w { fill: #fafafa; stroke: #3b3a39; stroke-width: 1.300; }
.gallery .b { fill: #83beec; stroke: #1664a7; stroke-width: 1.300; }
.gallery .g { fill: #c8c6c4; stroke: #797775; stroke-width: 1.300; }
.cardtext { font-size: 10px; fill: #1b86cf; }
.txt { color: #1b86cf; font-size: 20px; font-weight: 700; }
.wells { padding: 15px 7px 0 5px; }
.wells h4, .opt { padding-left: 10px; line-height: 20px; }
.well { background: #fff; border: 1px dashed #b9b7b5; border-radius: 2px; height: 34px; line-height: 34px; padding-left: 10px; margin-top: 12px; white-space: nowrap; }
.well.wide { height: 36px; margin-top: 6px; padding-left: 13px; }
.wells .dt { font-weight: 600; color: #484644; margin: 13px 0 11px; }
.opt { display: flex; justify-content: space-between; align-items: center; height: 20px; }
.opt + .opt { margin-top: 14px; }
.sw { display: flex; align-items: center; justify-content: center; gap: 2px; width: 40px; height: 20px; border: 1px solid #797775; border-radius: 10px; background: #fff; font-size: 11px; color: #605e5c; }
.sw input { appearance: none; width: 10px; height: 10px; margin: 0; border-radius: 50%; background: #605e5c; }
.sw.lit { background: #605e5c; color: #fff; gap: 3px; }
.sw.lit input { background: #fff; }

.fields { width: 41px; border-left: 1px solid #e1dfdd; padding: 17px 0 0 12px; }
.fields .vert { margin: 18px 0 0 -2px; }

/* status bar */
.status { display: flex; align-items: center; justify-content: space-between; height: 29px; padding: 1px 18px 0 6px; border-bottom: 1px solid #000; color: #484644; }
.zoom { display: flex; align-items: center; gap: 8px; }
.zoom input { appearance: none; width: 124px; height: 16px; margin: 0; background: linear-gradient(#605e5c, #605e5c) 63px 5px / 2px 8px no-repeat, linear-gradient(#605e5c, #605e5c) 0 8px / 100% 1px no-repeat; }
.zoom input::-webkit-slider-thumb { appearance: none; width: 4px; height: 14px; background: #605e5c; }
.pct { margin: 0 22px 0 14px; }

/* taskbar */
.taskbar { display: flex; height: 51px; color: #fff; background: linear-gradient(90deg, #33383b 0, #2e3336 31%, #211f1f 35%, #3a2c24 43%, #241f1d 53%, #3b2c25 58%, #3d2d25 88%, #32373a 91%, #33383b); }
.start { width: 60px; display: grid; place-items: center; }
.search { display: flex; align-items: center; width: 430px; padding: 1px 0 0 15px; background: #f2f2f2; border: 1px solid #ccc; border-left: 0; }
.search input { flex: 1; min-width: 0; border: 0; background: none; padding: 0; margin-left: 13px; font: 17px/24px "Open Sans", sans-serif; outline: 0; }
.search input::placeholder { color: #333; opacity: 1; }
.bird { margin-right: 2px; }
.apps { display: flex; }
.apps button { width: 62px; display: grid; place-items: center; position: relative; }
.apps .run::after { content: ""; position: absolute; left: 5px; right: 6px; bottom: 0; height: 3px; background: #e89af0; }
.apps .active { background: #66605d; }
.apps .active::after { left: 0; right: 0; }
.tray { flex: 1; display: flex; align-items: center; justify-content: flex-end; padding-right: 20px; white-space: nowrap; }
.weather { font-size: 17px; }
.tray svg + svg { margin-right: 12px; }
.tray .news { margin: 0 10px 0 41px; }
.tray .up { margin: 0 12px 0 22px; }
.lang { margin-left: 2px; }
.tray time { margin: 0 22px 0 17px; text-align: center; line-height: 23px; font-size: 14px; }
.note { margin-top: 8px; }
.count { font-size: 15px; fill: #fff; }
```
